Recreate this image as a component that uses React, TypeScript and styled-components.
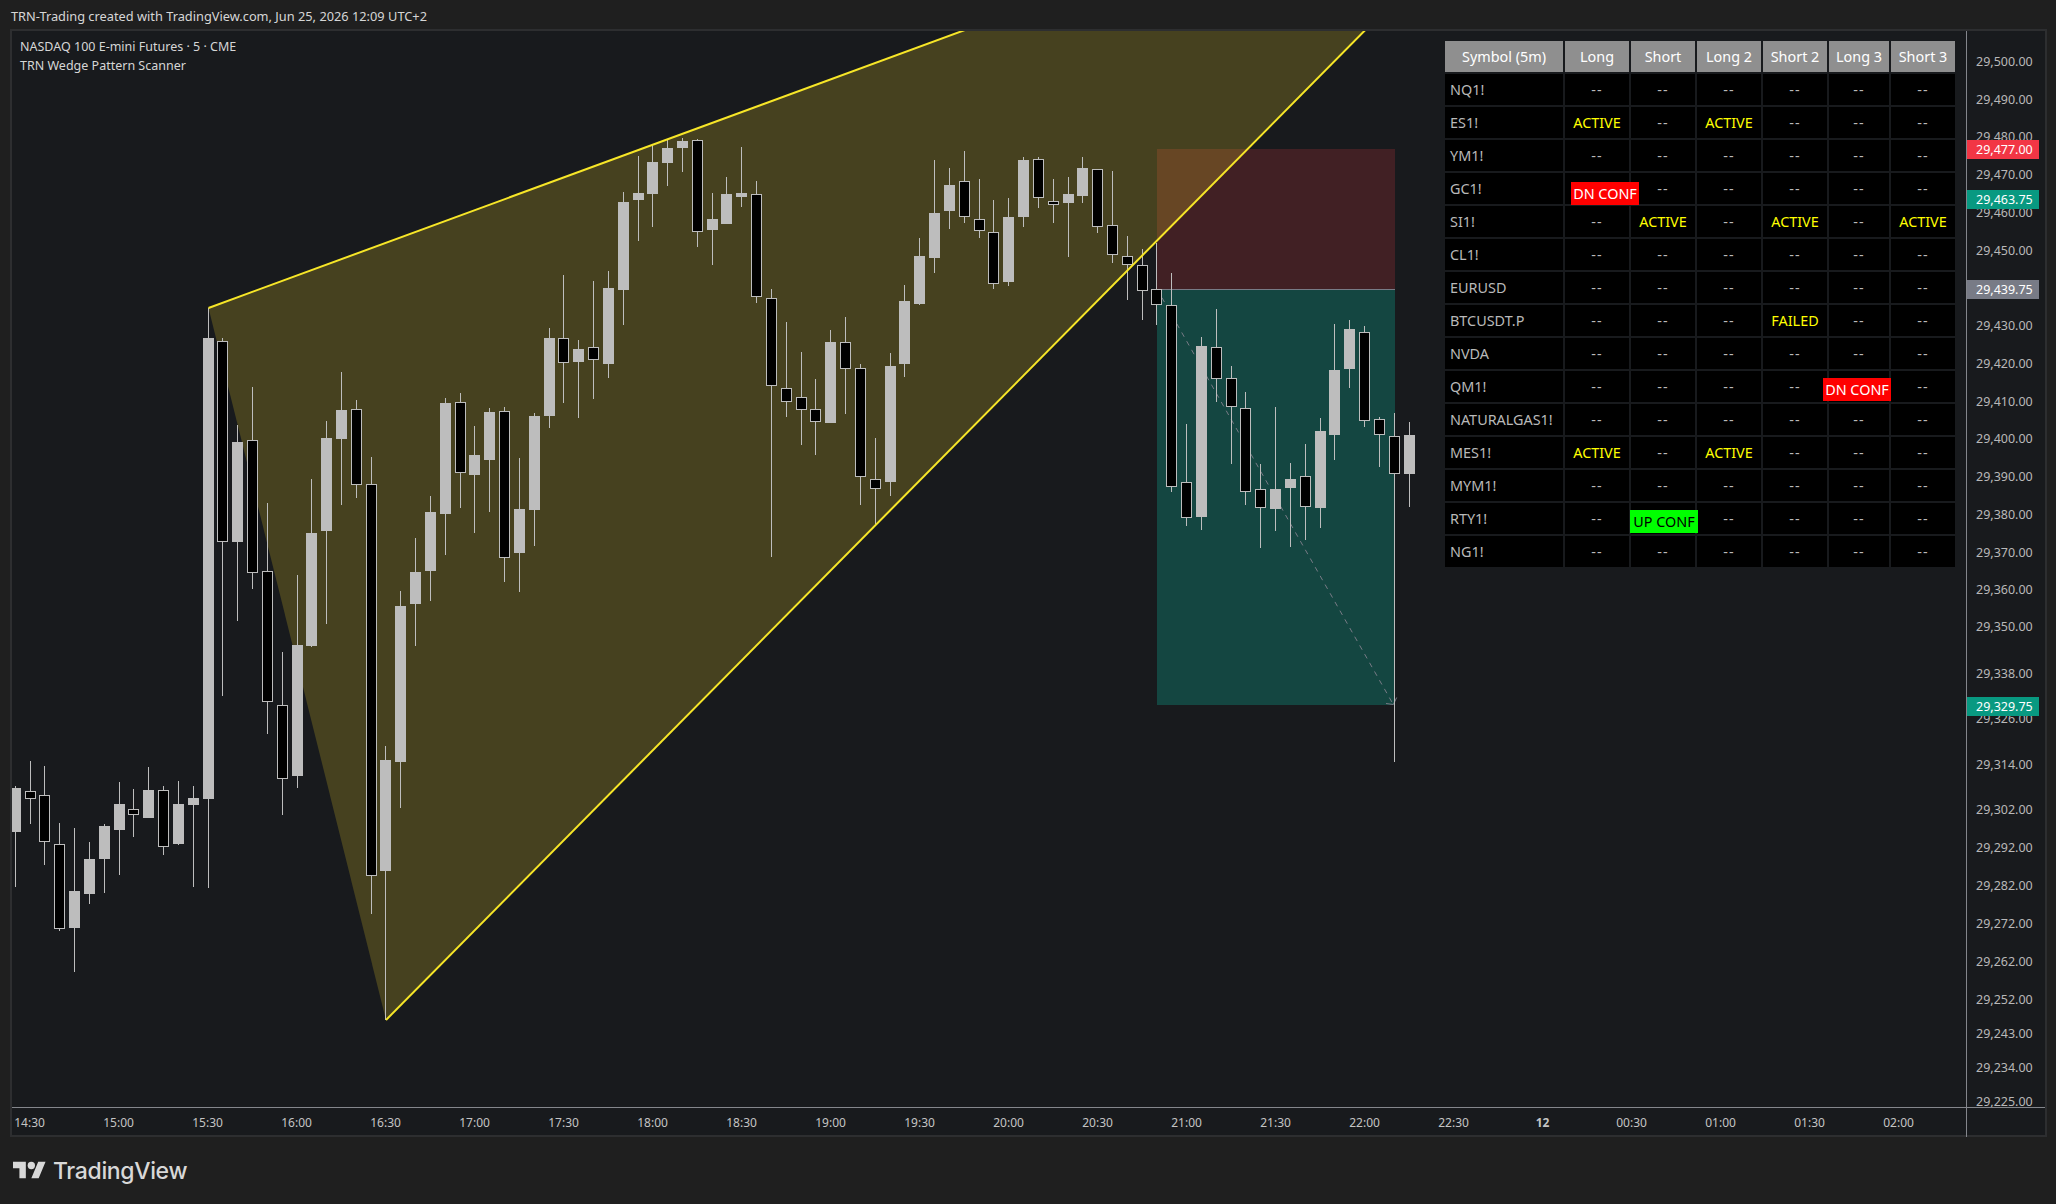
import styled, { createGlobalStyle } from "styled-components";

const UI_FONT = `"Noto Sans", "Open Sans", sans-serif`;

const GlobalStyle = createGlobalStyle`
    html, body {
        margin: 0;
        padding: 0;
        background-color: #1f1f1f;
    }
`;

const Page = styled.div`
    width: 2056px;
    height: 1204px;
    display: flex;
    flex-direction: column;
    background-color: #1f1f1f;
    font-family: ${UI_FONT};
    overflow: hidden;
`;

const TopBar = styled.div`
    height: 29px;
    padding: 3px 0 0 11px;
    box-sizing: border-box;
    display: flex;
    align-items: center;
    font-size: 12.8px;
    color: #d6d6d6;
`;

const Frame = styled.div`
    width: 2037px;
    height: 1108px;
    margin-left: 10px;
    box-sizing: border-box;
    border: 2px solid #2d2e30;
    background-color: #181a1d;
    display: grid;
    grid-template-columns: 1954px 79px;
    grid-template-rows: 1076px 30px;
`;

const Pane = styled.div`
    position: relative;
    overflow: hidden;
`;

const ChartSvg = styled.svg`
    display: block;
    width: 100%;
    height: 100%;
`;

const Legend = styled.div`
    position: absolute;
    top: 6px;
    left: 8px;
    display: flex;
    flex-direction: column;
    font-size: 12.5px;
    line-height: 19px;
    color: #d6d6d6;
`;

const Scanner = styled.div`
    position: absolute;
    top: 10px;
    left: 1433px;
    display: grid;
    grid-template-columns: 118px 64px 64px 64px 64px 60px 64px;
    grid-auto-rows: 31px;
    gap: 2px;
    font-size: 14.4px;
`;

const Row = styled.div`
    display: contents;
`;

const HeadCell = styled.div`
    display: flex;
    align-items: center;
    justify-content: center;
    white-space: nowrap;
    background-color: #8f8f8f;
    color: #ffffff;
`;

const SymbolCell = styled.div`
    display: flex;
    align-items: center;
    padding-left: 5px;
    background-color: #000000;
    color: #b9b9b9;
`;

const ValueCell = styled.div<{ $active?: boolean }>`
    position: relative;
    display: flex;
    align-items: center;
    justify-content: center;
    background-color: #000000;
    color: ${props => (props.$active ? "#ffff00" : "#b9b9b9")};
    font-size: 14.4px;
    letter-spacing: ${props => (props.$active ? "0" : "1px")};
`;

const Badge = styled.div<{ $bg: string; $fg: string; $left: number; $top: number }>`
    position: absolute;
    z-index: 1;
    left: ${props => props.$left}px;
    top: ${props => props.$top}px;
    width: 68px;
    height: 23px;
    padding-bottom: 1px;
    box-sizing: border-box;
    display: flex;
    align-items: center;
    justify-content: center;
    font-size: 14.4px;
    letter-spacing: 0;
    white-space: nowrap;
    background-color: ${props => props.$bg};
    color: ${props => props.$fg};
`;

const PriceAxis = styled.div`
    position: relative;
    overflow: hidden;
    border-left: 1px solid #84868c;
`;

const PriceLabel = styled.span<{ $y: number }>`
    position: absolute;
    left: 9px;
    top: ${props => props.$y - 31}px;
    transform: translateY(-50%);
    font-size: 12.5px;
    line-height: 16px;
    color: #b8b8b8;
`;

const PriceTag = styled.div<{ $y: number; $bg: string }>`
    position: absolute;
    left: 0;
    top: ${props => props.$y - 31}px;
    width: 72px;
    height: 19px;
    padding-left: 9px;
    box-sizing: border-box;
    display: flex;
    align-items: center;
    font-size: 12.5px;
    color: #ffffff;
    background-color: ${props => props.$bg};
`;

const TimeAxis = styled.div`
    display: flex;
    align-items: center;
    gap: 89px;
    padding-left: 17.6px;
    border-top: 1px solid #84868c;
    overflow: hidden;
    font-size: 12px;
    color: #c4c4c4;
`;

const TimeLabel = styled.span<{ $bold?: boolean }>`
    width: 0;
    display: flex;
    justify-content: center;
    font-weight: ${props => (props.$bold ? 700 : 400)};
`;

const AxisCorner = styled.div`
    border-top: 1px solid #84868c;
    border-left: 1px solid #84868c;
`;

const Footer = styled.div`
    flex: 1;
    display: flex;
    align-items: center;
    gap: 7px;
    padding: 0 0 0 13px;
    color: #d8d8d8;
`;

const LogoIcon = styled.svg`
    width: 33px;
    height: 26px;
    fill: #d8d8d8;
`;

const LogoText = styled.span`
    font-family: Inter, "Noto Sans", sans-serif;
    font-size: 23px;
    font-weight: 500;
    letter-spacing: -0.35px;
`;

// t: w = light body, b = black body / top, bottom of body / high, low wick
type Bar = ["w" | "b", number, number, number, number];

const BARS: Bar[] = [
    ["w", 788, 832, 786, 887], ["b", 791, 799, 761, 824], ["b", 795, 842, 766, 865], ["b", 844, 929, 823, 931],
    ["w", 891, 928, 828, 972], ["w", 859, 894, 842, 904], ["w", 826, 859, 824, 893], ["w", 804, 830, 782, 875],
    ["b", 809, 815, 789, 837], ["w", 790, 818, 767, 818], ["b", 790, 847, 786, 855], ["w", 804, 844, 781, 845],
    ["w", 798, 805, 786, 887], ["w", 338, 799, 308, 888], ["b", 341, 542, 338, 696], ["w", 442, 542, 425, 621],
    ["b", 440, 573, 387, 589], ["b", 571, 702, 503, 734], ["b", 705, 779, 652, 815], ["w", 645, 776, 575, 788],
    ["w", 533, 646, 479, 647], ["w", 438, 531, 421, 624], ["w", 410, 439, 372, 505], ["b", 409, 485, 400, 498],
    ["b", 484, 876, 457, 914], ["w", 760, 871, 746, 1020], ["w", 606, 762, 591, 808], ["w", 572, 604, 538, 646],
    ["w", 512, 571, 496, 601], ["w", 403, 514, 398, 555], ["b", 402, 473, 393, 508], ["w", 455, 475, 426, 533],
    ["w", 412, 460, 408, 512], ["b", 411, 558, 407, 582], ["w", 509, 553, 458, 592], ["w", 416, 510, 413, 546],
    ["w", 338, 416, 328, 428], ["b", 338, 363, 275, 403], ["w", 349, 362, 340, 418], ["b", 347, 360, 281, 399],
    ["w", 288, 364, 271, 378], ["w", 202, 290, 192, 325], ["w", 193, 200, 156, 241], ["w", 162, 194, 144, 227],
    ["w", 148, 163, 140, 186], ["w", 141, 148, 138, 172], ["b", 140, 232, 139, 247], ["w", 219, 230, 193, 265],
    ["w", 194, 224, 177, 224], ["w", 193, 197, 147, 207], ["b", 194, 297, 181, 303], ["b", 298, 386, 289, 557],
    ["b", 388, 402, 322, 417], ["b", 397, 410, 352, 445], ["b", 409, 422, 379, 455], ["w", 342, 423, 330, 423],
    ["b", 342, 369, 317, 414], ["b", 368, 477, 364, 505], ["b", 479, 489, 438, 525], ["w", 366, 482, 353, 496],
    ["w", 301, 364, 285, 377], ["w", 256, 304, 238, 305], ["w", 213, 258, 160, 273], ["w", 185, 211, 168, 229],
    ["b", 181, 217, 151, 223], ["b", 219, 231, 179, 238], ["b", 232, 284, 200, 289], ["w", 217, 282, 198, 286],
    ["w", 160, 217, 157, 227], ["b", 159, 198, 157, 208], ["b", 201, 205, 179, 223], ["w", 194, 203, 177, 257],
    ["w", 168, 196, 157, 203], ["b", 169, 227, 169, 233], ["b", 225, 255, 171, 263], ["b", 256, 265, 236, 300],
    ["b", 265, 291, 249, 320], ["b", 289, 305, 243, 325], ["b", 305, 487, 273, 492], ["b", 482, 518, 424, 526],
    ["w", 346, 517, 337, 530], ["b", 347, 379, 309, 402], ["b", 378, 407, 366, 464], ["b", 408, 492, 392, 505],
    ["b", 489, 508, 464, 548], ["w", 489, 509, 407, 531], ["w", 479, 488, 463, 547], ["b", 476, 507, 444, 540],
    ["w", 431, 508, 418, 528], ["w", 370, 435, 324, 460], ["w", 329, 369, 320, 388], ["b", 332, 421, 326, 427],
    ["b", 419, 435, 417, 467], ["b", 436, 474, 413, 762], ["w", 435, 474, 422, 507],
];

const barX = (i: number) => Math.floor(15.3 + 14.827 * i);

const COLUMNS = ["Long", "Short", "Long 2", "Short 2", "Long 3", "Short 3"];

const A = "ACTIVE";
const F = "FAILED";
const D = "DN CONF";
const U = "UP CONF";
const _ = "--";

const ROWS: [string, string[]][] = [
    ["NQ1!", [_, _, _, _, _, _]],
    ["ES1!", [A, _, A, _, _, _]],
    ["YM1!", [_, _, _, _, _, _]],
    ["GC1!", [D, _, _, _, _, _]],
    ["SI1!", [_, A, _, A, _, A]],
    ["CL1!", [_, _, _, _, _, _]],
    ["EURUSD", [_, _, _, _, _, _]],
    ["BTCUSDT.P", [_, _, _, F, _, _]],
    ["NVDA", [_, _, _, _, _, _]],
    ["QM1!", [_, _, _, _, D, _]],
    ["NATURALGAS1!", [_, _, _, _, _, _]],
    ["MES1!", [A, _, A, _, _, _]],
    ["MYM1!", [_, _, _, _, _, _]],
    ["RTY1!", [_, U, _, _, _, _]],
    ["NG1!", [_, _, _, _, _, _]],
];

const PRICES: [string, number][] = [
    ["29,500.00", 62], ["29,490.00", 100], ["29,480.00", 137], ["29,470.00", 175], ["29,460.00", 213],
    ["29,450.00", 251], ["29,430.00", 326], ["29,420.00", 364], ["29,410.00", 402], ["29,400.00", 439],
    ["29,390.00", 477], ["29,380.00", 515], ["29,370.00", 553], ["29,360.00", 590], ["29,350.00", 627],
    ["29,338.00", 674], ["29,326.00", 719], ["29,314.00", 765], ["29,302.00", 810], ["29,292.00", 848],
    ["29,282.00", 886], ["29,272.00", 924], ["29,262.00", 962], ["29,252.00", 1000], ["29,243.00", 1034],
    ["29,234.00", 1068], ["29,225.00", 1102],
];

const TAGS: [string, number, string][] = [
    ["29,477.00", 140, "#f23645"],
    ["29,463.75", 190, "#089981"],
    ["29,439.75", 280, "#787b86"],
    ["29,329.75", 697, "#089981"],
];

const TIMES = [
    "14:30", "15:00", "15:30", "16:00", "16:30", "17:00", "17:30", "18:00", "18:30", "19:00", "19:30",
    "20:00", "20:30", "21:00", "21:30", "22:00", "22:30", "12", "00:30", "01:00", "01:30", "02:00",
];

function StatusCell({ value, col }: { value: string; col: number }) {
    if (value === D) {
        return (
            <ValueCell>
                <Badge $bg="#ff0000" $fg="#ffffff" $left={col === 0 ? 6 : -6} $top={col === 0 ? 9 : 7}>{value}</Badge>
            </ValueCell>
        );
    }
    if (value === U) {
        return (
            <ValueCell>
                <Badge $bg="#00ff00" $fg="#000000" $left={-1} $top={7}>{value}</Badge>
            </ValueCell>
        );
    }
    return <ValueCell $active={value !== _}>{value}</ValueCell>;
}

function Candles() {
    return (
        <g shapeRendering="crispEdges">
            {BARS.map(([kind, top, bottom, high, low], i) => {
                const x = barX(i);
                return (
                    <g key={i}>
                        <rect x={x} y={high} width={1} height={low - high} fill="#bdbdbd" />
                        {kind === "w" ? (
                            <rect x={x - 5} y={top} width={11} height={bottom - top} fill="#bdbdbd" />
                        ) : (
                            <rect x={x - 4.5} y={top + 0.5} width={10} height={bottom - top - 1} fill="#000000" stroke="#bdbdbd" />
                        )}
                    </g>
                );
            })}
        </g>
    );
}

function Chart() {
    return (
        <ChartSvg viewBox="12 31 1954 1076">
            <rect x={1157} y={149} width={238} height={140} fill="#412024" />
            <rect x={1157} y={289} width={238} height={416} fill="#144641" />
            <line x1={1157} y1={289.5} x2={1395} y2={289.5} stroke="#787b86" />
            <polygon points="208.5,308 1046.6,0 1395,0 386,1020" fill="rgba(255, 225, 40, 0.2)" />
            <line x1={1157} y1={289} x2={1393} y2={704} stroke="#787b86" strokeDasharray="5 5" />
            <polyline points="1386,703.5 1393.3,704.5 1396.7,697.5" fill="none" stroke="#787b86" />
            <Candles />
            <polyline points="1046.6,0 208.5,308" fill="none" stroke="#f7e628" strokeWidth={2} />
            <polyline points="386,1020 1395,0" fill="none" stroke="#f7e628" strokeWidth={2} />
        </ChartSvg>
    );
}

export default function App() {
    return (
        <Page>
            <GlobalStyle />
            <TopBar>TRN-Trading created with TradingView.com, Jun 25, 2026 12:09 UTC+2</TopBar>
            <Frame>
                <Pane>
                    <Chart />
                    <Legend>
                        <span>NASDAQ 100 E-mini Futures · 5 · CME</span>
                        <span>TRN Wedge Pattern Scanner</span>
                    </Legend>
                    <Scanner>
                        <HeadCell>Symbol (5m)</HeadCell>
                        {COLUMNS.map(c => <HeadCell key={c}>{c}</HeadCell>)}
                        {ROWS.map(([symbol, values]) => (
                            <Row key={symbol}>
                                <SymbolCell>{symbol}</SymbolCell>
                                {values.map((v, i) => <StatusCell key={i} value={v} col={i} />)}
                            </Row>
                        ))}
                    </Scanner>
                </Pane>
                <PriceAxis>
                    {PRICES.map(([p, y]) => <PriceLabel key={p} $y={y}>{p}</PriceLabel>)}
                    {TAGS.map(([p, y, bg]) => <PriceTag key={p} $y={y} $bg={bg}>{p}</PriceTag>)}
                </PriceAxis>
                <TimeAxis>
                    {TIMES.map(t => <TimeLabel key={t} $bold={t === "12"}>{t}</TimeLabel>)}
                </TimeAxis>
                <AxisCorner />
            </Frame>
            <Footer>
                <LogoIcon viewBox="0 0 36 28">
                    <path d="M14 22H7V11H0V4h14v18zM28 22h-8l7.5-18h8L28 22z" />
                    <circle cx="20" cy="8" r="4" />
                </LogoIcon>
                <LogoText>TradingView</LogoText>
            </Footer>
        </Page>
    );
}
